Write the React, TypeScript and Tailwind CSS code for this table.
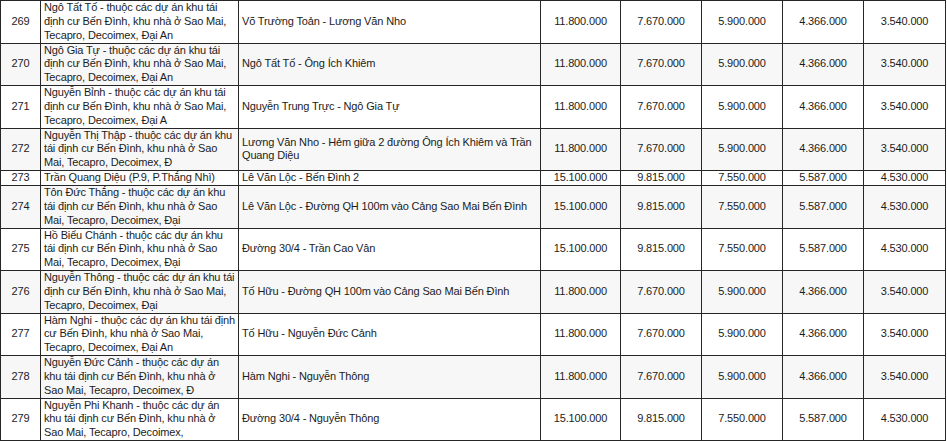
type Row = {
  no: number;
  street: string[];
  section: string[];
  prices: string[];
};

const P_LOW = ["11.800.000", "7.670.000", "5.900.000", "4.366.000", "3.540.000"];
const P_HIGH = ["15.100.000", "9.815.000", "7.550.000", "5.587.000", "4.530.000"];

const rows: Row[] = [
  {
    no: 269,
    street: ["Ngô Tất Tố - thuộc các dự án khu tái", "định cư Bến Đình, khu nhà ở Sao Mai,", "Tecapro, Decoimex, Đại An"],
    section: ["Võ Trường Toản - Lương Văn Nho"],
    prices: P_LOW,
  },
  {
    no: 270,
    street: ["Ngô Gia Tự - thuộc các dự án khu tái", "định cư Bến Đình, khu nhà ở Sao Mai,", "Tecapro, Decoimex, Đại An"],
    section: ["Ngô Tất Tố - Ông Ích Khiêm"],
    prices: P_LOW,
  },
  {
    no: 271,
    street: ["Nguyễn Bỉnh - thuộc các dự án khu tái", "định cư Bến Đình, khu nhà ở Sao Mai,", "Tecapro, Decoimex, Đại A"],
    section: ["Nguyễn Trung Trực - Ngô Gia Tự"],
    prices: P_LOW,
  },
  {
    no: 272,
    street: ["Nguyễn Thị Thập - thuộc các dự án khu", "tái định cư Bến Đình, khu nhà ở Sao", "Mai, Tecapro, Decoimex, Đ"],
    section: ["Lương Văn Nho - Hẻm giữa 2 đường Ông Ích Khiêm và Trần", "Quang Diệu"],
    prices: P_LOW,
  },
  {
    no: 273,
    street: ["Trần Quang Diệu (P.9, P.Thắng Nhì)"],
    section: ["Lê Văn Lộc - Bến Đình 2"],
    prices: P_HIGH,
  },
  {
    no: 274,
    street: ["Tôn Đức Thắng - thuộc các dự án khu", "tái định cư Bến Đình, khu nhà ở Sao", "Mai, Tecapro, Decoimex, Đại"],
    section: ["Lê Văn Lộc - Đường QH 100m vào Cảng Sao Mai Bến Đình"],
    prices: P_HIGH,
  },
  {
    no: 275,
    street: ["Hồ Biểu Chánh - thuộc các dự án khu", "tái định cư Bến Đình, khu nhà ở Sao", "Mai, Tecapro, Decoimex, Đại"],
    section: ["Đường 30/4 - Trần Cao Vân"],
    prices: P_HIGH,
  },
  {
    no: 276,
    street: ["Nguyễn Thông - thuộc các dự án khu tái", "định cư Bến Đình, khu nhà ở Sao Mai,", "Tecapro, Decoimex, Đại"],
    section: ["Tố Hữu - Đường QH 100m vào Cảng Sao Mai Bến Đình"],
    prices: P_LOW,
  },
  {
    no: 277,
    street: ["Hàm Nghi - thuộc các dự án khu tái định", "cư Bến Đình, khu nhà ở Sao Mai,", "Tecapro, Decoimex, Đại An"],
    section: ["Tố Hữu - Nguyễn Đức Cảnh"],
    prices: P_LOW,
  },
  {
    no: 278,
    street: ["Nguyễn Đức Cảnh - thuộc các dự án", "khu tái định cư Bến Đình, khu nhà ở", "Sao Mai, Tecapro, Decoimex, Đ"],
    section: ["Hàm Nghi - Nguyễn Thông"],
    prices: P_LOW,
  },
  {
    no: 279,
    street: ["Nguyễn Phi Khanh - thuộc các dự án", "khu tái định cư Bến Đình, khu nhà ở", "Sao Mai, Tecapro, Decoimex,"],
    section: ["Đường 30/4 - Nguyễn Thông"],
    prices: P_HIGH,
  },
];

function Lines({ lines }: { lines: string[] }) {
  return (
    <>
      {lines.map((l, i) => (
        <span key={i} className="block whitespace-nowrap">
          {l}
        </span>
      ))}
    </>
  );
}

export default function App() {
  return (
    <div className="w-[947px] h-[441px] overflow-hidden bg-white font-['Liberation_Sans',Arial,sans-serif] text-[11px] leading-[13.85px] tracking-[-0.15px] text-[#1c1c1c]">
      <table className="table-fixed border-collapse w-[946px]">
        <colgroup>
          <col className="w-[40px]" />
          <col className="w-[198px]" />
          <col className="w-[302px]" />
          <col className="w-[80px]" />
          <col className="w-[81px]" />
          <col className="w-[81px]" />
          <col className="w-[81px]" />
          <col className="w-[82px]" />
        </colgroup>
        <tbody>
          {rows.map((r, i) => (
            <tr key={r.no} className={i % 2 === 1 ? "bg-[#f7f7f7]" : "bg-white"}>
              <td className="border border-[#262626] text-center align-middle p-0">{r.no}</td>
              <td className="border border-[#262626] align-middle py-0 pl-[3px] pr-0 overflow-hidden">
                <Lines lines={r.street} />
              </td>
              <td className="border border-[#262626] align-middle py-0 pl-[3px] pr-0">
                <Lines lines={r.section} />
              </td>
              {r.prices.map((p, j) => (
                <td key={j} className="border border-[#262626] text-center align-middle p-0">
                  {p}
                </td>
              ))}
            </tr>
          ))}
        </tbody>
      </table>
    </div>
  );
}
